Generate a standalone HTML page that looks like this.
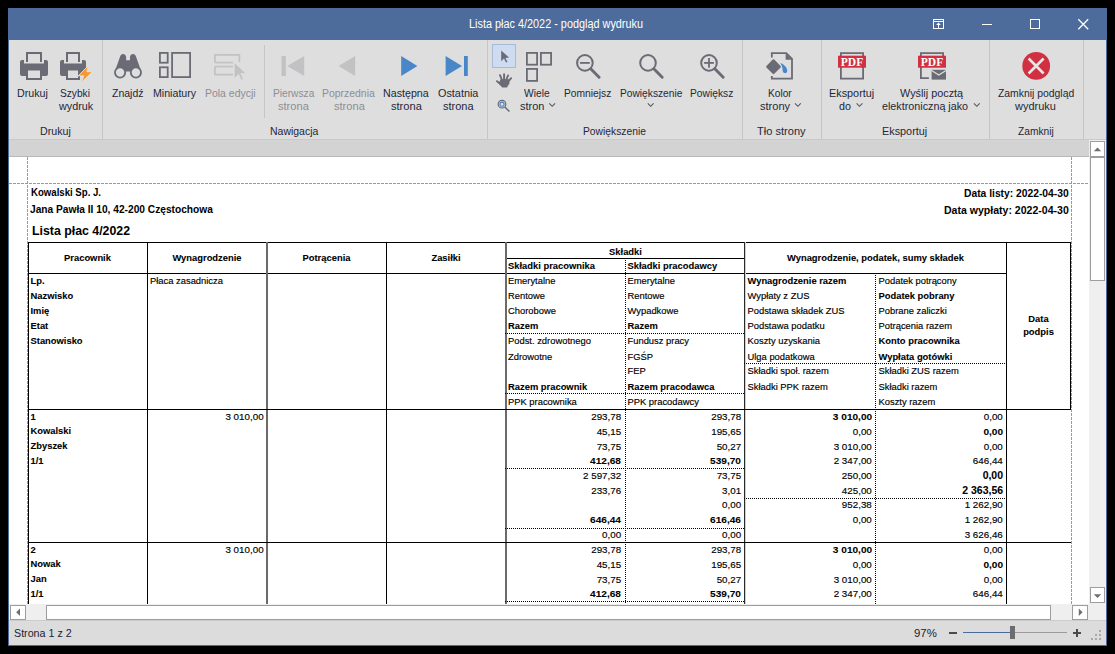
<!DOCTYPE html>
<html><head><meta charset="utf-8"><title>Lista płac 4/2022 - podgląd wydruku</title>
<style>
html,body{margin:0;padding:0;width:1115px;height:654px;overflow:hidden;background:#000;}
body{position:relative;font-family:"Liberation Sans",sans-serif;}
svg{position:absolute;left:0;top:0;}
.t{position:absolute;white-space:nowrap;}
.k{-webkit-text-stroke:0.15px #000;}
.kb{-webkit-text-stroke:0.08px #000;}
</style></head><body>
<svg width="1115" height="654"><rect x="8" y="8" width="1099" height="638" fill="#4d6c9b"/>
<rect x="9" y="40" width="1097" height="99" fill="#dedede"/>
<rect x="9" y="139" width="1097" height="1" fill="#c9c9c9"/>
<rect x="9" y="140" width="1080" height="16" fill="#d3d3d3"/>
<rect x="9" y="156" width="1080" height="1" fill="#b9b9b9"/>
<rect x="9" y="157" width="1080" height="447" fill="#ffffff"/>
<rect x="1089" y="140" width="17" height="465" fill="#efefef"/>
<rect x="9" y="604" width="1097" height="16" fill="#efefef"/>
<rect x="9" y="620" width="1097" height="1" fill="#cccccc"/>
<rect x="9" y="621" width="1097" height="24" fill="#dcdcdc"/>
<rect x="102" y="40" width="1" height="99" fill="#c6c6c6"/>
<rect x="487" y="40" width="1" height="99" fill="#c6c6c6"/>
<rect x="742" y="40" width="1" height="99" fill="#c6c6c6"/>
<rect x="821" y="40" width="1" height="99" fill="#c6c6c6"/>
<rect x="989" y="40" width="1" height="99" fill="#c6c6c6"/>
<rect x="1083" y="40" width="1" height="99" fill="#c6c6c6"/>
<rect x="264" y="45" width="1" height="73" fill="#c6c6c6"/>
<g fill="none" stroke="#fff" stroke-width="1" shape-rendering="crispEdges"><rect x="933.5" y="19.5" width="10" height="9"/><path d="M934 21.5H943"/><path d="M938.5 24.5v4"/><path d="M936.1 25L938.5 22.4L940.9 25Z" fill="#fff" stroke="none" shape-rendering="auto"/><path d="M982 24.5h10"/><rect x="1030.5" y="19.5" width="9" height="9"/></g>
<path d="M1078.3 19.3L1088.2 29.2M1088.2 19.3L1078.3 29.2" stroke="#fff" stroke-width="1.3"/>
<path fill="#6a6b74" fill-rule="evenodd" d="M26.0 52h16v10h-2V54h-12v8h-2z"/>
<path fill="#6a6b74" d="M22 60h2v3.6h20V60h2a2 2 0 0 1 2 2v12a2 2 0 0 1-2 2h-4.0v-6h-16v6h-4.0a2 2 0 0 1-2-2V62a2 2 0 0 1 2-2z"/>
<path fill="#6a6b74" fill-rule="evenodd" d="M26.0 70h16v10h-16z M28.0 70.6v7.4h12v-7.4z"/>
<path fill="#6a6b74" fill-rule="evenodd" d="M66.0 52h14v10h-2V54h-10v8h-2z"/>
<path fill="#6a6b74" d="M62 60h2v3.6h18V60h2a2 2 0 0 1 2 2v12a2 2 0 0 1-2 2h-4.0v-6h-14v6h-4.0a2 2 0 0 1-2-2V62a2 2 0 0 1 2-2z"/>
<path fill="#6a6b74" fill-rule="evenodd" d="M66.0 70h14v10h-14z M68.0 70.6v7.4h10v-7.4z"/>
<path fill="#f39a34" stroke="#dedede" stroke-width="1" d="M88.2 65.8L78.2 75.9h5.6L81.3 82.3l11.2-10.6h-5.6z"/>
<path fill="#6a6b74" d="M114.8 71.5L120.3 56.1A3 3 0 0 1 126.1 56.4V60.3H130V56.4A3 3 0 0 1 135.8 56.1L141.3 71.5Z"/>
<g fill="#dedede" stroke="#6a6b74" stroke-width="1.8"><circle cx="120.1" cy="72.5" r="5.1"/><circle cx="135.9" cy="72.5" r="5.1"/></g>
<g fill="none" stroke="#6a6b74" stroke-width="1.8"><rect x="159.9" y="52.9" width="7.8" height="9.8"/><rect x="159.9" y="67.3" width="7.8" height="9.8"/><rect x="172.1" y="52.9" width="18" height="24.2"/></g>
<g fill="none" stroke="#c2c2c4" stroke-width="1.7"><path d="M222 54.8h17.4v7.5"/><path d="M214.9 62.6V54.8h7"/><path d="M214.9 62.6h18"/><path d="M214.9 66.6h18"/><path d="M214.9 66.6v8h18"/></g>
<path fill="#c2c2c4" stroke="#dedede" stroke-width="0.8" d="M234.2 62.2L246 73.6H240.8L243.4 79.3L241.2 80.2L238.6 74.5L234.2 78.6Z"/>
<rect x="281.5" y="56" width="4.4" height="20" fill="#c2c2c4"/><path fill="#c2c2c4" d="M287.2 66L304.2 56v20z"/>
<path fill="#c2c2c4" d="M338.6 66L355.2 56v20z"/>
<path fill="#4a87c9" d="M401.2 56L417.4 66L401.2 76z"/>
<path fill="#4a87c9" d="M445.6 56L462 66L445.6 76z"/><rect x="464" y="56" width="3.8" height="20" fill="#4a87c9"/>
<rect x="492.5" y="44.5" width="23" height="23" fill="#cddcf1" stroke="#a9bad6"/>
<path fill="#6a6b74" d="M501.2 50.6L509 57.6l-3.6 0.3 2.1 4-1.5 0.7-2-4-2.8 2.6z"/>
<g stroke="#6a6b74" stroke-width="1.9" stroke-linecap="round" fill="none"><path d="M502.4 81L500 75.2M504.1 81V74.3M505.9 81L508 75.5M507.6 82.5L511.1 78.2M500.8 84.3L497 81.2"/></g>
<path fill="#6a6b74" d="M500.6 79.2H509.2L509.4 83.2L507 87.6H502.2L498.6 83.6Z"/>
<circle cx="502" cy="104.2" r="3.8" fill="none" stroke="#6a6b74" stroke-width="1.2"/><circle cx="502" cy="104.2" r="2.1" fill="none" stroke="#4a87c9" stroke-width="1.1"/><path d="M504.8 107l4.6 4.5" stroke="#6a6b74" stroke-width="1.5"/>
<g fill="none" stroke="#6a6b74" stroke-width="1.8"><rect x="526.9" y="52.9" width="10.2" height="11.8"/><rect x="540.9" y="52.9" width="10.2" height="11.8"/><rect x="526.9" y="68.9" width="10.2" height="12"/></g>
<circle cx="584.9" cy="62.9" r="7.8" fill="none" stroke="#6a6b74" stroke-width="2"/>
<path d="M590.6999999999999 68.8L599.1 77.2" stroke="#6a6b74" stroke-width="2.9" stroke-linecap="round"/>
<path d="M580.0 62.9h9.8" stroke="#6a6b74" stroke-width="1.8"/>
<circle cx="648" cy="62.9" r="7.8" fill="none" stroke="#6a6b74" stroke-width="2"/>
<path d="M653.8 68.8L662.2 77.2" stroke="#6a6b74" stroke-width="2.9" stroke-linecap="round"/>
<circle cx="709" cy="62.9" r="7.8" fill="none" stroke="#6a6b74" stroke-width="2"/>
<path d="M714.8 68.8L723.2 77.2" stroke="#6a6b74" stroke-width="2.9" stroke-linecap="round"/>
<path d="M704.1 62.9h9.8" stroke="#6a6b74" stroke-width="1.8"/>
<path d="M709 58v9.8" stroke="#6a6b74" stroke-width="1.8"/>
<path d="M549.3 103.4l2.9 2.9 2.9-2.9" fill="none" stroke="#555560" stroke-width="1.1"/>
<path d="M647.8 103.4l2.9 2.9 2.9-2.9" fill="none" stroke="#555560" stroke-width="1.1"/>
<path d="M795 103.4l2.9 2.9 2.9-2.9" fill="none" stroke="#555560" stroke-width="1.1"/>
<path d="M856.6 103.4l2.9 2.9 2.9-2.9" fill="none" stroke="#555560" stroke-width="1.1"/>
<path d="M973.9 103.4l2.9 2.9 2.9-2.9" fill="none" stroke="#555560" stroke-width="1.1"/>
<path fill="none" stroke="#6a6b74" stroke-width="1.8" d="M771.8 57.6V53.2h14.5l5.7 5.7V78.6H771.8v-2.6"/><path fill="#6a6b74" d="M785.6 53.2v6.5h6.4z"/>
<path fill="#6a6b74" stroke="#6a6b74" stroke-width="2.2" stroke-linejoin="round" d="M773.5 60.4l6.3 6.3-6.3 6.3-6.3-6.3z"/>
<path fill="#4a87c9" d="M780.4 62.9c3.6 1.2 6.9 4.6 6.9 7.9a2.3 2.3 0 0 1-4.6 0.3c0-2.8-0.8-5.4-2.3-8.2z"/>
<path fill="none" stroke="#6a6b74" stroke-width="1.8" d="M840.9 60V53.2h22.2V78.6H840.9V66"/>
<rect x="838" y="55.7" width="28" height="12" fill="#d22f40"/>
<text x="852" y="65.6" text-anchor="middle" font-family="Liberation Serif" font-weight="bold" font-size="11.5" fill="#fff">PDF</text>
<path fill="none" stroke="#6a6b74" stroke-width="1.8" d="M920.9 60V53.2h22.2V66 M920.9 66V78.2h8"/>
<rect x="918" y="55.7" width="28" height="12" fill="#d22f40"/>
<text x="932" y="65.6" text-anchor="middle" font-family="Liberation Serif" font-weight="bold" font-size="11.5" fill="#fff">PDF</text>
<rect x="931.6" y="69.8" width="14.4" height="9.8" fill="#6a6b74"/><path d="M931.6 70.4l7.2 4.6 7.2-4.6" fill="none" stroke="#dedede" stroke-width="1.2"/>
<circle cx="1036.2" cy="65.9" r="13.9" fill="#d12f42"/><path d="M1028.6 58.5l15 15M1043.6 58.5l-15 15" stroke="#e6e6e6" stroke-width="2.6"/>
<g stroke="#9a9a9a" stroke-width="1" stroke-dasharray="3 1" fill="none"><path d="M27.5 157V604"/><path d="M1071.5 157V604"/><path d="M9 183.5H1089"/></g>
<rect x="1090.5" y="141.5" width="14" height="15" fill="#fff" stroke="#9d9d9d"/>
<path fill="#6e6e6e" d="M1093.8 151.2h7.4l-3.7-3.8z"/>
<rect x="1090.5" y="157.5" width="14" height="123" fill="#fff" stroke="#9d9d9d"/>
<rect x="1090.5" y="587.5" width="14" height="15" fill="#fff" stroke="#9d9d9d"/>
<path fill="#6e6e6e" d="M1093.8 594.2h7.4l-3.7 3.8z"/>
<rect x="10.5" y="605.5" width="15" height="14" fill="#fff" stroke="#9d9d9d"/>
<path fill="#6e6e6e" d="M20 608.6v7.4l-3.8-3.7z"/>
<rect x="46.5" y="605.5" width="1004" height="14" fill="#fff" stroke="#9d9d9d"/>
<rect x="1072.5" y="605.5" width="15" height="14" fill="#fff" stroke="#9d9d9d"/>
<path fill="#6e6e6e" d="M1078.8 608.6v7.4l3.8-3.7z"/>
<g shape-rendering="crispEdges">
<rect x="949" y="632" width="8" height="2" fill="#4a4a4a"/>
<rect x="963" y="632" width="47" height="1" fill="#4a6aa0"/><rect x="1015" y="632" width="52" height="1" fill="#9a9a9a"/>
<rect x="1010" y="626" width="5" height="13" fill="#6d6d6d"/>
<rect x="1073" y="632" width="8" height="2" fill="#4a4a4a"/><rect x="1076" y="629" width="2" height="8" fill="#4a4a4a"/>
<rect x="1099" y="630" width="2" height="2" fill="#a8a8a8"/>
<rect x="1095" y="634" width="2" height="2" fill="#a8a8a8"/>
<rect x="1099" y="634" width="2" height="2" fill="#a8a8a8"/>
<rect x="1091" y="638" width="2" height="2" fill="#a8a8a8"/>
<rect x="1095" y="638" width="2" height="2" fill="#a8a8a8"/>
<rect x="1099" y="638" width="2" height="2" fill="#a8a8a8"/>
</g>
<g shape-rendering="crispEdges">
<rect x="28" y="242" width="1043" height="1" fill="#000"/>
<rect x="28" y="242" width="1" height="362" fill="#000"/>
<rect x="28" y="273" width="979" height="1" fill="#000"/>
<rect x="505" y="258" width="239" height="1" fill="#000"/>
<rect x="147" y="242" width="1" height="362" fill="#000"/>
<rect x="266" y="242" width="2" height="362" fill="#6a6a6a"/>
<rect x="386" y="242" width="1" height="362" fill="#000"/>
<rect x="505" y="242" width="2" height="362" fill="#6a6a6a"/>
<rect x="744" y="242" width="1" height="362" fill="#2a2a2a"/>
<rect x="745" y="242" width="1" height="362" fill="#d0d0d0"/>
<rect x="1006" y="242" width="1" height="362" fill="#000"/>
<rect x="1070" y="242" width="1" height="168" fill="#000"/>
<rect x="28" y="409" width="1043" height="1" fill="#000"/>
<rect x="28" y="542" width="1043" height="1" fill="#000"/>
<path d="M625.5 258V604" stroke="#000" stroke-width="1" stroke-dasharray="1 1"/>
<path d="M875.5 273V604" stroke="#000" stroke-width="1" stroke-dasharray="1 1"/>
<path d="M505 333.5H744" stroke="#000" stroke-width="1" stroke-dasharray="1 1"/>
<path d="M505 393.5H744" stroke="#000" stroke-width="1" stroke-dasharray="1 1"/>
<path d="M744 363.5H1006" stroke="#000" stroke-width="1" stroke-dasharray="1 1"/>
<path d="M505 468.5H744" stroke="#000" stroke-width="1" stroke-dasharray="1 1"/>
<path d="M505 528.5H744" stroke="#000" stroke-width="1" stroke-dasharray="1 1"/>
<path d="M744 498.5H1006" stroke="#000" stroke-width="1" stroke-dasharray="1 1"/>
<path d="M505 601.5H744" stroke="#000" stroke-width="1" stroke-dasharray="1 1"/>
</g></svg>
<div class="t" style="top:18.34px;font-size:12px;line-height:12px;color:#ffffff;left:469.00px;transform:scaleX(0.9057);transform-origin:0 0;">Lista płac 4/2022 - podgląd wydruku</div>
<div class="t" style="top:88.29px;font-size:11px;line-height:11px;color:#262636;left:17.40px;transform:scaleX(0.9718);transform-origin:0 0;">Drukuj</div>
<div class="t" style="top:88.29px;font-size:11px;line-height:11px;color:#262636;left:60.30px;transform:scaleX(0.9227);transform-origin:0 0;">Szybki</div>
<div class="t" style="top:100.99px;font-size:11px;line-height:11px;color:#262636;left:59.00px;transform:scaleX(0.9815);transform-origin:0 0;">wydruk</div>
<div class="t" style="top:125.99px;font-size:11px;line-height:11px;color:#262636;left:39.70px;transform:scaleX(0.9686);transform-origin:0 0;">Drukuj</div>
<div class="t" style="top:88.29px;font-size:11px;line-height:11px;color:#262636;left:111.80px;transform:scaleX(0.9536);transform-origin:0 0;">Znajdź</div>
<div class="t" style="top:88.29px;font-size:11px;line-height:11px;color:#262636;left:152.60px;transform:scaleX(0.9658);transform-origin:0 0;">Miniatury</div>
<div class="t" style="top:88.29px;font-size:11px;line-height:11px;color:#8d8d95;left:204.60px;transform:scaleX(0.9511);transform-origin:0 0;">Pola edycji</div>
<div class="t" style="top:88.29px;font-size:11px;line-height:11px;color:#8d8d95;left:272.50px;transform:scaleX(0.9255);transform-origin:0 0;">Pierwsza</div>
<div class="t" style="top:100.99px;font-size:11px;line-height:11px;color:#8d8d95;left:277.60px;transform:scaleX(1.0073);transform-origin:0 0;">strona</div>
<div class="t" style="top:88.29px;font-size:11px;line-height:11px;color:#8d8d95;left:322.40px;transform:scaleX(0.9487);transform-origin:0 0;">Poprzednia</div>
<div class="t" style="top:100.99px;font-size:11px;line-height:11px;color:#8d8d95;left:333.60px;transform:scaleX(1.0073);transform-origin:0 0;">strona</div>
<div class="t" style="top:88.29px;font-size:11px;line-height:11px;color:#262636;left:383.30px;transform:scaleX(0.9704);transform-origin:0 0;">Następna</div>
<div class="t" style="top:100.99px;font-size:11px;line-height:11px;color:#262636;left:390.60px;transform:scaleX(1.0073);transform-origin:0 0;">strona</div>
<div class="t" style="top:88.29px;font-size:11px;line-height:11px;color:#262636;left:437.60px;transform:scaleX(0.9861);transform-origin:0 0;">Ostatnia</div>
<div class="t" style="top:100.99px;font-size:11px;line-height:11px;color:#262636;left:442.50px;transform:scaleX(1.0007);transform-origin:0 0;">strona</div>
<div class="t" style="top:125.99px;font-size:11px;line-height:11px;color:#262636;left:269.70px;transform:scaleX(0.9517);transform-origin:0 0;">Nawigacja</div>
<div class="t" style="top:88.29px;font-size:11px;line-height:11px;color:#262636;left:524.40px;transform:scaleX(0.9304);transform-origin:0 0;">Wiele</div>
<div class="t" style="top:100.99px;font-size:11px;line-height:11px;color:#262636;left:519.70px;transform:scaleX(0.9931);transform-origin:0 0;">stron</div>
<div class="t" style="top:88.29px;font-size:11px;line-height:11px;color:#262636;left:564.00px;transform:scaleX(0.9340);transform-origin:0 0;">Pomniejsz</div>
<div class="t" style="top:88.29px;font-size:11px;line-height:11px;color:#262636;left:619.60px;transform:scaleX(0.9277);transform-origin:0 0;">Powiększenie</div>
<div class="t" style="top:88.29px;font-size:11px;line-height:11px;color:#262636;left:690.00px;transform:scaleX(0.9340);transform-origin:0 0;">Powiększ</div>
<div class="t" style="top:125.99px;font-size:11px;line-height:11px;color:#262636;left:582.50px;transform:scaleX(0.9351);transform-origin:0 0;">Powiększenie</div>
<div class="t" style="top:88.29px;font-size:11px;line-height:11px;color:#262636;left:768.30px;transform:scaleX(0.9226);transform-origin:0 0;">Kolor</div>
<div class="t" style="top:100.99px;font-size:11px;line-height:11px;color:#262636;left:759.70px;transform:scaleX(1.0044);transform-origin:0 0;">strony</div>
<div class="t" style="top:125.99px;font-size:11px;line-height:11px;color:#262636;left:756.90px;transform:scaleX(1.0063);transform-origin:0 0;">Tło strony</div>
<div class="t" style="top:88.29px;font-size:11px;line-height:11px;color:#262636;left:829.20px;transform:scaleX(0.9856);transform-origin:0 0;">Eksportuj</div>
<div class="t" style="top:100.99px;font-size:11px;line-height:11px;color:#262636;left:839.30px;transform:scaleX(0.9714);transform-origin:0 0;">do</div>
<div class="t" style="top:88.29px;font-size:11px;line-height:11px;color:#262636;left:899.60px;transform:scaleX(0.9845);transform-origin:0 0;">Wyślij pocztą</div>
<div class="t" style="top:100.99px;font-size:11px;line-height:11px;color:#262636;left:882.40px;transform:scaleX(0.9777);transform-origin:0 0;">elektroniczną jako</div>
<div class="t" style="top:125.99px;font-size:11px;line-height:11px;color:#262636;left:882.40px;transform:scaleX(0.9856);transform-origin:0 0;">Eksportuj</div>
<div class="t" style="top:88.29px;font-size:11px;line-height:11px;color:#262636;left:997.80px;transform:scaleX(0.9440);transform-origin:0 0;">Zamknij podgląd</div>
<div class="t" style="top:100.99px;font-size:11px;line-height:11px;color:#262636;left:1015.30px;transform:scaleX(0.9983);transform-origin:0 0;">wydruku</div>
<div class="t" style="top:125.99px;font-size:11px;line-height:11px;color:#262636;left:1017.70px;transform:scaleX(0.9269);transform-origin:0 0;">Zamknij</div>
<div class="t" style="top:627.69px;font-size:11px;line-height:11px;color:#22222e;left:14.00px;transform:scaleX(0.9726);transform-origin:0 0;">Strona 1 z 2</div>
<div class="t" style="top:627.69px;font-size:11px;line-height:11px;color:#22222e;left:913.70px;transform:scaleX(1.0349);transform-origin:0 0;">97%</div>
<div class="t" style="top:187.21px;font-size:10.5px;line-height:10.5px;color:#000000;font-weight:bold;left:30.80px;transform:scaleX(0.9156);transform-origin:0 0;">Kowalski Sp. J.</div>
<div class="t" style="top:203.91px;font-size:10.5px;line-height:10.5px;color:#000000;font-weight:bold;left:30.30px;transform:scaleX(0.9702);transform-origin:0 0;">Jana Pawła II 10, 42-200 Częstochowa</div>
<div class="t" style="top:224.54px;font-size:12px;line-height:12px;color:#000000;font-weight:bold;left:31.50px;transform:scaleX(1.0274);transform-origin:0 0;">Lista płac 4/2022</div>
<div class="t" style="top:188.31px;font-size:10.5px;line-height:10.5px;color:#000000;font-weight:bold;left:963.60px;transform:scaleX(0.9802);transform-origin:0 0;">Data listy: 2022-04-30</div>
<div class="t" style="top:205.11px;font-size:10.5px;line-height:10.5px;color:#000000;font-weight:bold;left:943.50px;transform:scaleX(1.0038);transform-origin:0 0;">Data wypłaty: 2022-04-30</div>
<div class="t kb" style="top:253.04px;font-size:9.4px;line-height:9.4px;color:#000000;font-weight:bold;left:64.05px;transform:scaleX(1.0000);transform-origin:50% 0;">Pracownik</div>
<div class="t kb" style="top:253.04px;font-size:9.4px;line-height:9.4px;color:#000000;font-weight:bold;left:172.45px;transform:scaleX(1.0000);transform-origin:50% 0;">Wynagrodzenie</div>
<div class="t kb" style="top:253.04px;font-size:9.4px;line-height:9.4px;color:#000000;font-weight:bold;left:302.53px;transform:scaleX(1.0000);transform-origin:50% 0;">Potrącenia</div>
<div class="t kb" style="top:253.04px;font-size:9.4px;line-height:9.4px;color:#000000;font-weight:bold;left:431.41px;transform:scaleX(1.0000);transform-origin:50% 0;">Zasiłki</div>
<div class="t kb" style="top:247.34px;font-size:9.4px;line-height:9.4px;color:#000000;font-weight:bold;left:609.08px;transform:scaleX(1.0000);transform-origin:50% 0;">Składki</div>
<div class="t kb" style="top:260.84px;font-size:9.4px;line-height:9.4px;color:#000000;font-weight:bold;left:508.00px;transform:scaleX(1.0000);transform-origin:0 0;">Składki pracownika</div>
<div class="t kb" style="top:260.84px;font-size:9.4px;line-height:9.4px;color:#000000;font-weight:bold;left:627.50px;transform:scaleX(1.0000);transform-origin:0 0;">Składki pracodawcy</div>
<div class="t kb" style="top:253.04px;font-size:9.4px;line-height:9.4px;color:#000000;font-weight:bold;left:787.02px;transform:scaleX(1.0000);transform-origin:50% 0;">Wynagrodzenie, podatek, sumy składek</div>
<div class="t kb" style="top:313.84px;font-size:9.4px;line-height:9.4px;color:#000000;font-weight:bold;left:1028.34px;transform:scaleX(1.0000);transform-origin:50% 0;">Data</div>
<div class="t kb" style="top:326.84px;font-size:9.4px;line-height:9.4px;color:#000000;font-weight:bold;left:1023.13px;transform:scaleX(1.0000);transform-origin:50% 0;">podpis</div>
<div class="t kb" style="top:275.84px;font-size:9.4px;line-height:9.4px;color:#000000;font-weight:bold;left:30.50px;transform:scaleX(1.0000);transform-origin:0 0;">Lp.</div>
<div class="t kb" style="top:290.84px;font-size:9.4px;line-height:9.4px;color:#000000;font-weight:bold;left:30.50px;transform:scaleX(1.0000);transform-origin:0 0;">Nazwisko</div>
<div class="t kb" style="top:305.84px;font-size:9.4px;line-height:9.4px;color:#000000;font-weight:bold;left:30.50px;transform:scaleX(1.0000);transform-origin:0 0;">Imię</div>
<div class="t kb" style="top:320.84px;font-size:9.4px;line-height:9.4px;color:#000000;font-weight:bold;left:30.50px;transform:scaleX(1.0000);transform-origin:0 0;">Etat</div>
<div class="t kb" style="top:335.84px;font-size:9.4px;line-height:9.4px;color:#000000;font-weight:bold;left:30.50px;transform:scaleX(1.0000);transform-origin:0 0;">Stanowisko</div>
<div class="t k" style="top:275.84px;font-size:9.4px;line-height:9.4px;color:#000000;left:150.00px;transform:scaleX(1.0000);transform-origin:0 0;">Płaca zasadnicza</div>
<div class="t k" style="top:275.84px;font-size:9.4px;line-height:9.4px;color:#000000;left:508.00px;transform:scaleX(1.0000);transform-origin:0 0;">Emerytalne</div>
<div class="t k" style="top:290.84px;font-size:9.4px;line-height:9.4px;color:#000000;left:508.00px;transform:scaleX(1.0000);transform-origin:0 0;">Rentowe</div>
<div class="t k" style="top:305.84px;font-size:9.4px;line-height:9.4px;color:#000000;left:508.00px;transform:scaleX(1.0000);transform-origin:0 0;">Chorobowe</div>
<div class="t kb" style="top:320.84px;font-size:9.4px;line-height:9.4px;color:#000000;font-weight:bold;left:508.00px;transform:scaleX(1.0000);transform-origin:0 0;">Razem</div>
<div class="t k" style="top:335.84px;font-size:9.4px;line-height:9.4px;color:#000000;left:508.00px;transform:scaleX(1.0000);transform-origin:0 0;">Podst. zdrowotnego</div>
<div class="t k" style="top:351.84px;font-size:9.4px;line-height:9.4px;color:#000000;left:508.00px;transform:scaleX(1.0000);transform-origin:0 0;">Zdrowotne</div>
<div class="t kb" style="top:381.84px;font-size:9.4px;line-height:9.4px;color:#000000;font-weight:bold;left:508.00px;transform:scaleX(1.0000);transform-origin:0 0;">Razem pracownik</div>
<div class="t k" style="top:396.64px;font-size:9.4px;line-height:9.4px;color:#000000;left:508.00px;transform:scaleX(1.0000);transform-origin:0 0;">PPK pracownika</div>
<div class="t k" style="top:275.84px;font-size:9.4px;line-height:9.4px;color:#000000;left:627.50px;transform:scaleX(1.0000);transform-origin:0 0;">Emerytalne</div>
<div class="t k" style="top:290.84px;font-size:9.4px;line-height:9.4px;color:#000000;left:627.50px;transform:scaleX(1.0000);transform-origin:0 0;">Rentowe</div>
<div class="t k" style="top:305.84px;font-size:9.4px;line-height:9.4px;color:#000000;left:627.50px;transform:scaleX(1.0000);transform-origin:0 0;">Wypadkowe</div>
<div class="t kb" style="top:320.84px;font-size:9.4px;line-height:9.4px;color:#000000;font-weight:bold;left:627.50px;transform:scaleX(1.0000);transform-origin:0 0;">Razem</div>
<div class="t k" style="top:335.84px;font-size:9.4px;line-height:9.4px;color:#000000;left:627.50px;transform:scaleX(1.0000);transform-origin:0 0;">Fundusz pracy</div>
<div class="t k" style="top:351.84px;font-size:9.4px;line-height:9.4px;color:#000000;left:627.50px;transform:scaleX(1.0000);transform-origin:0 0;">FGŚP</div>
<div class="t k" style="top:365.84px;font-size:9.4px;line-height:9.4px;color:#000000;left:627.50px;transform:scaleX(1.0000);transform-origin:0 0;">FEP</div>
<div class="t kb" style="top:381.84px;font-size:9.4px;line-height:9.4px;color:#000000;font-weight:bold;left:627.50px;transform:scaleX(1.0000);transform-origin:0 0;">Razem pracodawca</div>
<div class="t k" style="top:396.64px;font-size:9.4px;line-height:9.4px;color:#000000;left:627.50px;transform:scaleX(1.0000);transform-origin:0 0;">PPK pracodawcy</div>
<div class="t kb" style="top:275.84px;font-size:9.4px;line-height:9.4px;color:#000000;font-weight:bold;left:747.50px;transform:scaleX(1.0000);transform-origin:0 0;">Wynagrodzenie razem</div>
<div class="t k" style="top:290.84px;font-size:9.4px;line-height:9.4px;color:#000000;left:747.50px;transform:scaleX(1.0000);transform-origin:0 0;">Wypłaty z ZUS</div>
<div class="t k" style="top:305.84px;font-size:9.4px;line-height:9.4px;color:#000000;left:747.50px;transform:scaleX(1.0000);transform-origin:0 0;">Podstawa składek ZUS</div>
<div class="t k" style="top:320.84px;font-size:9.4px;line-height:9.4px;color:#000000;left:747.50px;transform:scaleX(1.0000);transform-origin:0 0;">Podstawa podatku</div>
<div class="t k" style="top:335.84px;font-size:9.4px;line-height:9.4px;color:#000000;left:747.50px;transform:scaleX(1.0000);transform-origin:0 0;">Koszty uzyskania</div>
<div class="t k" style="top:351.84px;font-size:9.4px;line-height:9.4px;color:#000000;left:747.50px;transform:scaleX(1.0000);transform-origin:0 0;">Ulga podatkowa</div>
<div class="t k" style="top:365.84px;font-size:9.4px;line-height:9.4px;color:#000000;left:747.50px;transform:scaleX(1.0000);transform-origin:0 0;">Składki społ. razem</div>
<div class="t k" style="top:381.84px;font-size:9.4px;line-height:9.4px;color:#000000;left:747.50px;transform:scaleX(1.0000);transform-origin:0 0;">Składki PPK razem</div>
<div class="t k" style="top:275.84px;font-size:9.4px;line-height:9.4px;color:#000000;left:878.50px;transform:scaleX(1.0000);transform-origin:0 0;">Podatek potrącony</div>
<div class="t kb" style="top:290.84px;font-size:9.4px;line-height:9.4px;color:#000000;font-weight:bold;left:878.50px;transform:scaleX(1.0000);transform-origin:0 0;">Podatek pobrany</div>
<div class="t k" style="top:305.84px;font-size:9.4px;line-height:9.4px;color:#000000;left:878.50px;transform:scaleX(1.0000);transform-origin:0 0;">Pobrane zaliczki</div>
<div class="t k" style="top:320.84px;font-size:9.4px;line-height:9.4px;color:#000000;left:878.50px;transform:scaleX(1.0000);transform-origin:0 0;">Potrącenia razem</div>
<div class="t kb" style="top:335.84px;font-size:9.4px;line-height:9.4px;color:#000000;font-weight:bold;left:878.50px;transform:scaleX(1.0000);transform-origin:0 0;">Konto pracownika</div>
<div class="t kb" style="top:351.84px;font-size:9.4px;line-height:9.4px;color:#000000;font-weight:bold;left:878.50px;transform:scaleX(1.0000);transform-origin:0 0;">Wypłata gotówki</div>
<div class="t k" style="top:365.84px;font-size:9.4px;line-height:9.4px;color:#000000;left:878.50px;transform:scaleX(1.0000);transform-origin:0 0;">Składki ZUS razem</div>
<div class="t k" style="top:381.84px;font-size:9.4px;line-height:9.4px;color:#000000;left:878.50px;transform:scaleX(1.0000);transform-origin:0 0;">Składki razem</div>
<div class="t k" style="top:396.64px;font-size:9.4px;line-height:9.4px;color:#000000;left:878.50px;transform:scaleX(1.0000);transform-origin:0 0;">Koszty razem</div>
<div class="t kb" style="top:411.54px;font-size:9.4px;line-height:9.4px;color:#000000;font-weight:bold;left:30.50px;transform:scaleX(1.0000);transform-origin:0 0;">1</div>
<div class="t kb" style="top:426.29px;font-size:9.4px;line-height:9.4px;color:#000000;font-weight:bold;left:30.50px;transform:scaleX(1.0000);transform-origin:0 0;">Kowalski</div>
<div class="t kb" style="top:441.04px;font-size:9.4px;line-height:9.4px;color:#000000;font-weight:bold;left:30.50px;transform:scaleX(1.0000);transform-origin:0 0;">Zbyszek</div>
<div class="t kb" style="top:455.79px;font-size:9.4px;line-height:9.4px;color:#000000;font-weight:bold;left:30.50px;transform:scaleX(1.0000);transform-origin:0 0;">1/1</div>
<div class="t k" style="top:412.20px;font-size:9.8px;line-height:9.8px;color:#000000;left:225.46px;transform:scaleX(1.0000);transform-origin:100% 0;">3 010,00</div>
<div class="t k" style="top:412.20px;font-size:9.8px;line-height:9.8px;color:#000000;left:591.23px;transform:scaleX(1.0000);transform-origin:100% 0;">293,78</div>
<div class="t k" style="top:426.95px;font-size:9.8px;line-height:9.8px;color:#000000;left:596.67px;transform:scaleX(1.0000);transform-origin:100% 0;">45,15</div>
<div class="t k" style="top:441.70px;font-size:9.8px;line-height:9.8px;color:#000000;left:596.67px;transform:scaleX(1.0000);transform-origin:100% 0;">73,75</div>
<div class="t kb" style="top:456.45px;font-size:9.8px;line-height:9.8px;color:#000000;font-weight:bold;left:591.23px;transform:scaleX(1.0300);transform-origin:100% 0;">412,68</div>
<div class="t k" style="top:471.20px;font-size:9.8px;line-height:9.8px;color:#000000;left:583.06px;transform:scaleX(1.0000);transform-origin:100% 0;">2 597,32</div>
<div class="t k" style="top:485.95px;font-size:9.8px;line-height:9.8px;color:#000000;left:591.23px;transform:scaleX(1.0000);transform-origin:100% 0;">233,76</div>
<div class="t kb" style="top:515.45px;font-size:9.8px;line-height:9.8px;color:#000000;font-weight:bold;left:591.23px;transform:scaleX(1.0300);transform-origin:100% 0;">646,44</div>
<div class="t k" style="top:530.20px;font-size:9.8px;line-height:9.8px;color:#000000;left:602.12px;transform:scaleX(1.0000);transform-origin:100% 0;">0,00</div>
<div class="t k" style="top:412.20px;font-size:9.8px;line-height:9.8px;color:#000000;left:711.23px;transform:scaleX(1.0000);transform-origin:100% 0;">293,78</div>
<div class="t k" style="top:426.95px;font-size:9.8px;line-height:9.8px;color:#000000;left:711.23px;transform:scaleX(1.0000);transform-origin:100% 0;">195,65</div>
<div class="t k" style="top:441.70px;font-size:9.8px;line-height:9.8px;color:#000000;left:716.67px;transform:scaleX(1.0000);transform-origin:100% 0;">50,27</div>
<div class="t kb" style="top:456.45px;font-size:9.8px;line-height:9.8px;color:#000000;font-weight:bold;left:711.23px;transform:scaleX(1.0300);transform-origin:100% 0;">539,70</div>
<div class="t k" style="top:471.20px;font-size:9.8px;line-height:9.8px;color:#000000;left:716.67px;transform:scaleX(1.0000);transform-origin:100% 0;">73,75</div>
<div class="t k" style="top:485.95px;font-size:9.8px;line-height:9.8px;color:#000000;left:722.12px;transform:scaleX(1.0000);transform-origin:100% 0;">3,01</div>
<div class="t k" style="top:499.90px;font-size:9.8px;line-height:9.8px;color:#000000;left:722.12px;transform:scaleX(1.0000);transform-origin:100% 0;">0,00</div>
<div class="t kb" style="top:515.45px;font-size:9.8px;line-height:9.8px;color:#000000;font-weight:bold;left:711.23px;transform:scaleX(1.0300);transform-origin:100% 0;">616,46</div>
<div class="t k" style="top:530.20px;font-size:9.8px;line-height:9.8px;color:#000000;left:722.12px;transform:scaleX(1.0000);transform-origin:100% 0;">0,00</div>
<div class="t kb" style="top:412.20px;font-size:9.8px;line-height:9.8px;color:#000000;font-weight:bold;left:833.66px;transform:scaleX(1.0300);transform-origin:100% 0;">3 010,00</div>
<div class="t k" style="top:426.95px;font-size:9.8px;line-height:9.8px;color:#000000;left:852.72px;transform:scaleX(1.0000);transform-origin:100% 0;">0,00</div>
<div class="t k" style="top:441.70px;font-size:9.8px;line-height:9.8px;color:#000000;left:833.66px;transform:scaleX(1.0000);transform-origin:100% 0;">3 010,00</div>
<div class="t k" style="top:456.45px;font-size:9.8px;line-height:9.8px;color:#000000;left:833.66px;transform:scaleX(1.0000);transform-origin:100% 0;">2 347,00</div>
<div class="t k" style="top:471.20px;font-size:9.8px;line-height:9.8px;color:#000000;left:841.83px;transform:scaleX(1.0000);transform-origin:100% 0;">250,00</div>
<div class="t k" style="top:485.95px;font-size:9.8px;line-height:9.8px;color:#000000;left:841.83px;transform:scaleX(1.0000);transform-origin:100% 0;">425,00</div>
<div class="t k" style="top:499.90px;font-size:9.8px;line-height:9.8px;color:#000000;left:841.83px;transform:scaleX(1.0000);transform-origin:100% 0;">952,38</div>
<div class="t k" style="top:515.45px;font-size:9.8px;line-height:9.8px;color:#000000;left:852.72px;transform:scaleX(1.0000);transform-origin:100% 0;">0,00</div>
<div class="t k" style="top:412.20px;font-size:9.8px;line-height:9.8px;color:#000000;left:983.72px;transform:scaleX(1.0000);transform-origin:100% 0;">0,00</div>
<div class="t kb" style="top:426.95px;font-size:9.8px;line-height:9.8px;color:#000000;font-weight:bold;left:983.72px;transform:scaleX(1.0300);transform-origin:100% 0;">0,00</div>
<div class="t k" style="top:441.70px;font-size:9.8px;line-height:9.8px;color:#000000;left:983.72px;transform:scaleX(1.0000);transform-origin:100% 0;">0,00</div>
<div class="t k" style="top:456.45px;font-size:9.8px;line-height:9.8px;color:#000000;left:972.83px;transform:scaleX(1.0000);transform-origin:100% 0;">646,44</div>
<div class="t kb" style="top:470.36px;font-size:10.8px;line-height:10.8px;color:#000000;font-weight:bold;left:981.78px;transform:scaleX(0.9700);transform-origin:100% 0;">0,00</div>
<div class="t kb" style="top:485.11px;font-size:10.8px;line-height:10.8px;color:#000000;font-weight:bold;left:960.77px;transform:scaleX(0.9700);transform-origin:100% 0;">2 363,56</div>
<div class="t k" style="top:499.90px;font-size:9.8px;line-height:9.8px;color:#000000;left:964.66px;transform:scaleX(1.0000);transform-origin:100% 0;">1 262,90</div>
<div class="t k" style="top:515.45px;font-size:9.8px;line-height:9.8px;color:#000000;left:964.66px;transform:scaleX(1.0000);transform-origin:100% 0;">1 262,90</div>
<div class="t k" style="top:530.20px;font-size:9.8px;line-height:9.8px;color:#000000;left:964.66px;transform:scaleX(1.0000);transform-origin:100% 0;">3 626,46</div>
<div class="t kb" style="top:544.54px;font-size:9.4px;line-height:9.4px;color:#000000;font-weight:bold;left:30.50px;transform:scaleX(1.0000);transform-origin:0 0;">2</div>
<div class="t kb" style="top:559.29px;font-size:9.4px;line-height:9.4px;color:#000000;font-weight:bold;left:30.50px;transform:scaleX(1.0000);transform-origin:0 0;">Nowak</div>
<div class="t kb" style="top:574.04px;font-size:9.4px;line-height:9.4px;color:#000000;font-weight:bold;left:30.50px;transform:scaleX(1.0000);transform-origin:0 0;">Jan</div>
<div class="t kb" style="top:588.79px;font-size:9.4px;line-height:9.4px;color:#000000;font-weight:bold;left:30.50px;transform:scaleX(1.0000);transform-origin:0 0;">1/1</div>
<div class="t k" style="top:545.20px;font-size:9.8px;line-height:9.8px;color:#000000;left:225.46px;transform:scaleX(1.0000);transform-origin:100% 0;">3 010,00</div>
<div class="t k" style="top:545.20px;font-size:9.8px;line-height:9.8px;color:#000000;left:591.23px;transform:scaleX(1.0000);transform-origin:100% 0;">293,78</div>
<div class="t k" style="top:559.95px;font-size:9.8px;line-height:9.8px;color:#000000;left:596.67px;transform:scaleX(1.0000);transform-origin:100% 0;">45,15</div>
<div class="t k" style="top:574.70px;font-size:9.8px;line-height:9.8px;color:#000000;left:596.67px;transform:scaleX(1.0000);transform-origin:100% 0;">73,75</div>
<div class="t kb" style="top:589.45px;font-size:9.8px;line-height:9.8px;color:#000000;font-weight:bold;left:591.23px;transform:scaleX(1.0300);transform-origin:100% 0;">412,68</div>
<div class="t k" style="top:545.20px;font-size:9.8px;line-height:9.8px;color:#000000;left:711.23px;transform:scaleX(1.0000);transform-origin:100% 0;">293,78</div>
<div class="t k" style="top:559.95px;font-size:9.8px;line-height:9.8px;color:#000000;left:711.23px;transform:scaleX(1.0000);transform-origin:100% 0;">195,65</div>
<div class="t k" style="top:574.70px;font-size:9.8px;line-height:9.8px;color:#000000;left:716.67px;transform:scaleX(1.0000);transform-origin:100% 0;">50,27</div>
<div class="t kb" style="top:589.45px;font-size:9.8px;line-height:9.8px;color:#000000;font-weight:bold;left:711.23px;transform:scaleX(1.0300);transform-origin:100% 0;">539,70</div>
<div class="t kb" style="top:545.20px;font-size:9.8px;line-height:9.8px;color:#000000;font-weight:bold;left:833.66px;transform:scaleX(1.0300);transform-origin:100% 0;">3 010,00</div>
<div class="t k" style="top:559.95px;font-size:9.8px;line-height:9.8px;color:#000000;left:852.72px;transform:scaleX(1.0000);transform-origin:100% 0;">0,00</div>
<div class="t k" style="top:574.70px;font-size:9.8px;line-height:9.8px;color:#000000;left:833.66px;transform:scaleX(1.0000);transform-origin:100% 0;">3 010,00</div>
<div class="t k" style="top:589.45px;font-size:9.8px;line-height:9.8px;color:#000000;left:833.66px;transform:scaleX(1.0000);transform-origin:100% 0;">2 347,00</div>
<div class="t k" style="top:545.20px;font-size:9.8px;line-height:9.8px;color:#000000;left:983.72px;transform:scaleX(1.0000);transform-origin:100% 0;">0,00</div>
<div class="t kb" style="top:559.95px;font-size:9.8px;line-height:9.8px;color:#000000;font-weight:bold;left:983.72px;transform:scaleX(1.0300);transform-origin:100% 0;">0,00</div>
<div class="t k" style="top:574.70px;font-size:9.8px;line-height:9.8px;color:#000000;left:983.72px;transform:scaleX(1.0000);transform-origin:100% 0;">0,00</div>
<div class="t k" style="top:589.45px;font-size:9.8px;line-height:9.8px;color:#000000;left:972.83px;transform:scaleX(1.0000);transform-origin:100% 0;">646,44</div>
</body></html>
